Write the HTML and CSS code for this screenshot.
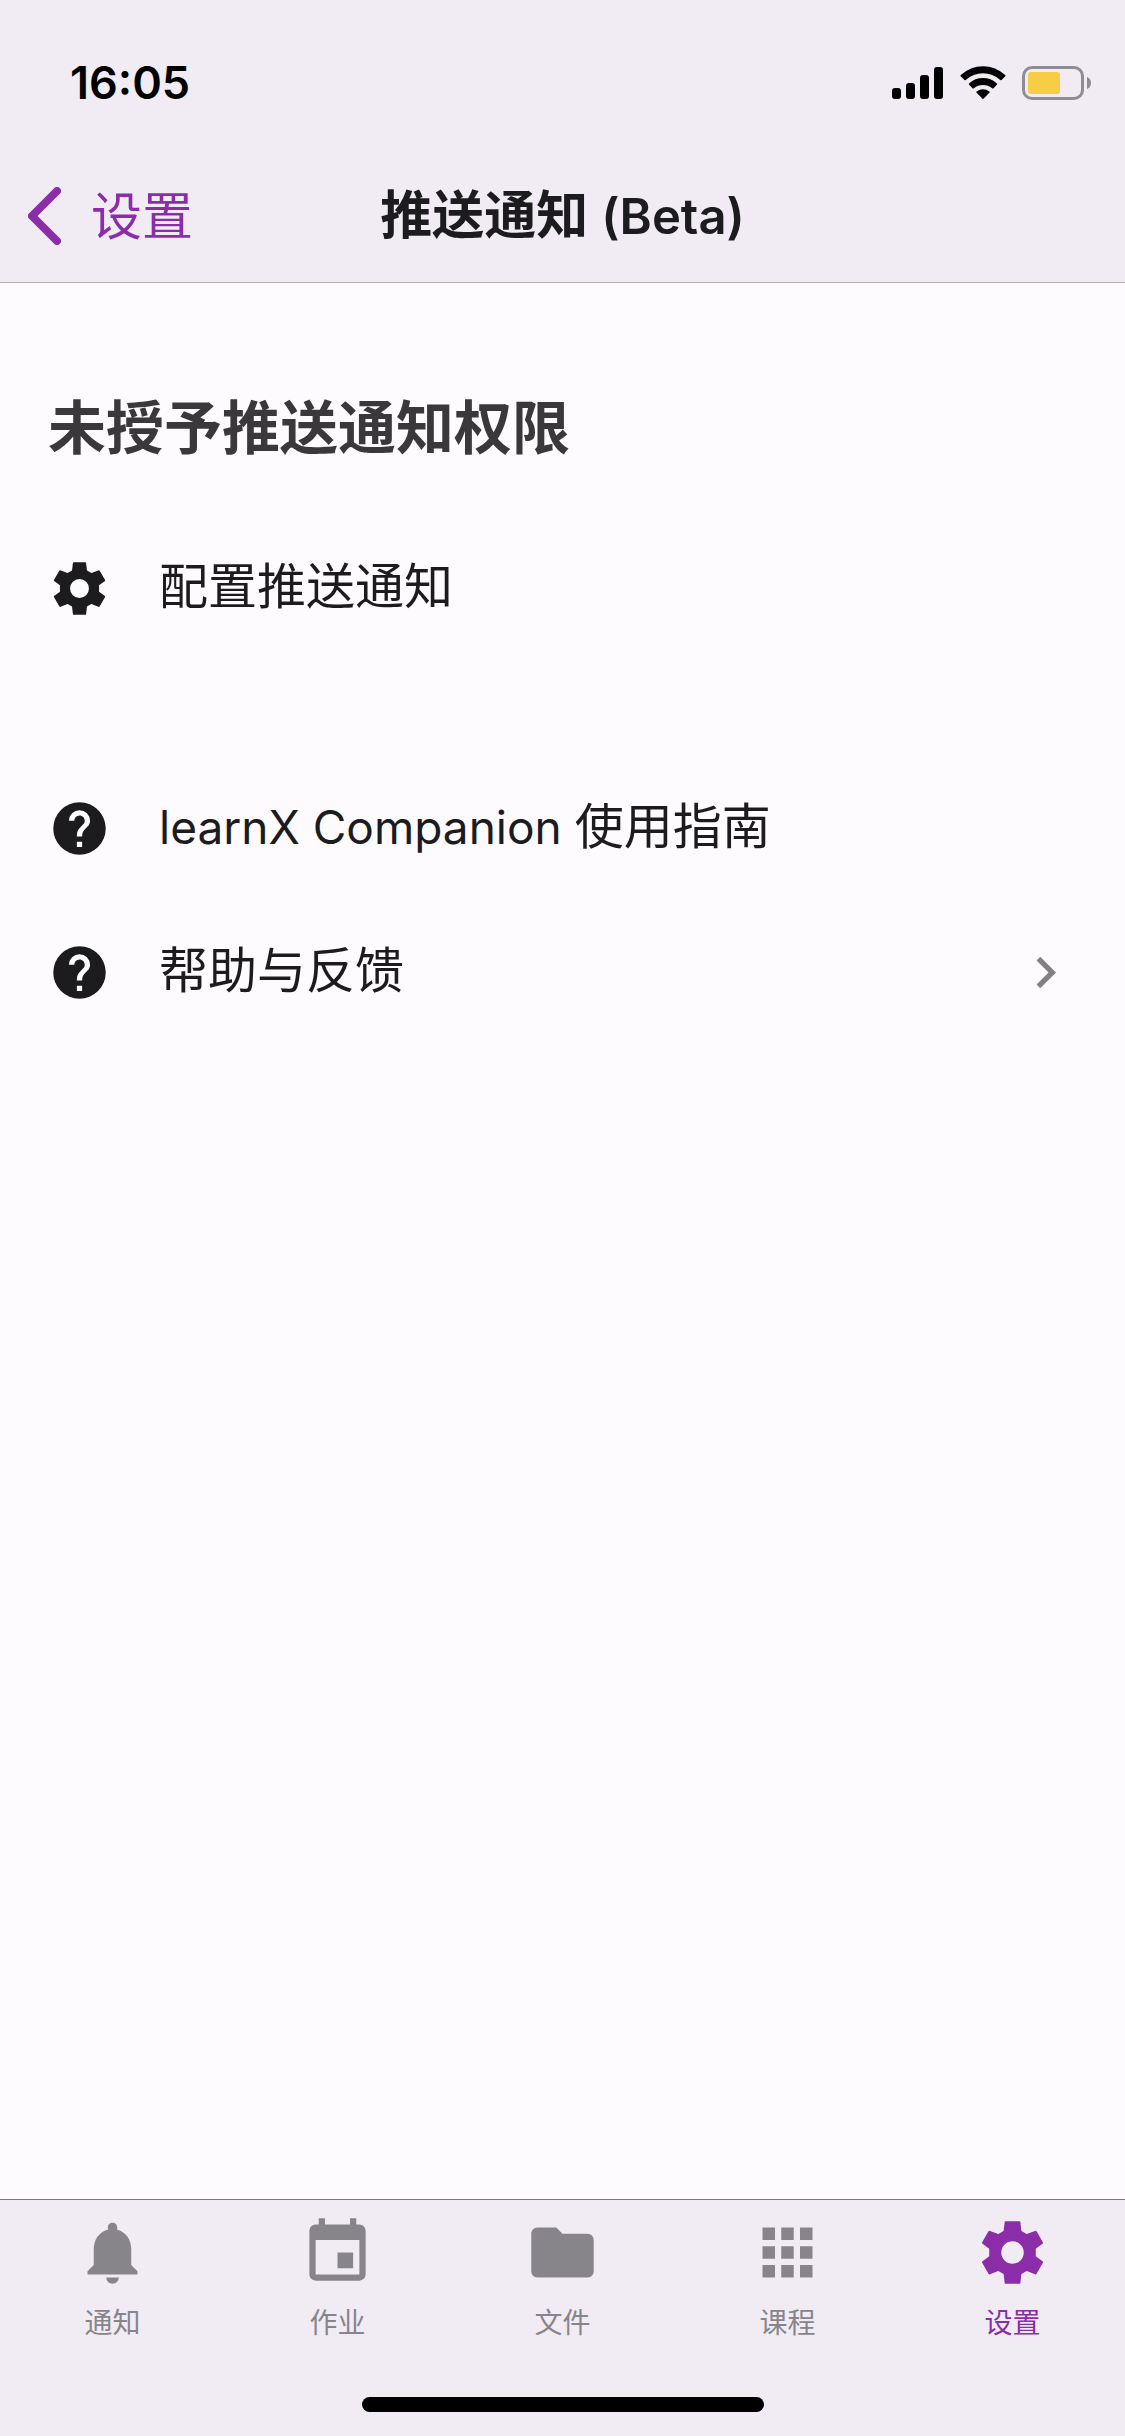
FILE: index.html
```html
<!DOCTYPE html>
<html lang="zh-CN">
<head>
<meta charset="utf-8">
<meta name="viewport" content="width=device-width, initial-scale=1">
<title>推送通知 (Beta)</title>
<link rel="stylesheet" href="styles.css">
</head>
<body>
<svg class="symbols" aria-hidden="true">
  <symbol id="cog" viewBox="0 0 24 24">
    <path fill-rule="evenodd" d="M9.7 2H14.3Q14.5 2 14.5 2.2L14.85 5.1L16.55 6.1L19.4 5Q19.6 5 19.7 5.2L21.75 8.8Q21.8 9 21.7 9.1L19.45 10.8V13.2L21.7 14.9Q21.8 15 21.75 15.2L19.7 18.8Q19.6 19 19.4 19L16.55 17.9L14.85 18.9L14.5 21.8Q14.5 22 14.3 22H9.7Q9.5 22 9.5 21.8L9.15 18.9L7.45 17.9L4.6 19Q4.4 19 4.3 18.8L2.25 15.2Q2.2 15 2.3 14.9L4.55 13.2V10.8L2.3 9.1Q2.2 9 2.25 8.8L4.3 5.2Q4.4 5 4.6 5L7.45 6.1L9.15 5.1L9.5 2.2Q9.5 2 9.7 2ZM12 8.4A3.6 3.6 0 1 0 12 15.6A3.6 3.6 0 1 0 12 8.4Z"/>
  </symbol>
  <symbol id="help" viewBox="0 0 24 24">
    <path d="M15.07 11.25L14.17 12.17C13.45 12.89 13 13.5 13 15H11V14.5C11 13.39 11.45 12.39 12.17 11.67L13.41 10.41C13.78 10.05 14 9.55 14 9C14 7.89 13.1 7 12 7A2 2 0 0 0 10 9H8A4 4 0 0 1 12 5A4 4 0 0 1 16 9C16 9.88 15.64 10.67 15.07 11.25M13 19H11V17H13M12 2A10 10 0 0 0 2 12A10 10 0 0 0 12 22A10 10 0 0 0 22 12C22 6.47 17.5 2 12 2Z"/>
  </symbol>
</svg>

<header class="header">
  <div class="status">
    <time class="clock">16:05</time>
    <div class="indicators">
      <svg width="52" height="34" viewBox="0 0 52 34" aria-label="信号">
        <rect x="0" y="22" width="9" height="11" rx="3"/>
        <rect x="14" y="17" width="9" height="16" rx="3"/>
        <rect x="28" y="9" width="9" height="24" rx="3"/>
        <rect x="42" y="1" width="9" height="32" rx="3"/>
      </svg>
      <svg width="46" height="34" viewBox="0 0 46 34" aria-label="无线网络">
        <path d="M23 33.3L29.6 26.6Q29.9 26 29.4 25.6A11 11 0 0 0 16.6 25.6Q16.1 26 16.4 26.6ZM9 18.6L12.7 22.4Q13.3 22.8 13.9 22.3A14.5 14.5 0 0 1 32.1 22.3Q32.7 22.8 33.3 22.4L37 18.6Q37.5 18 36.9 17.4A20.5 20.5 0 0 0 9.1 17.4Q8.5 18 9 18.6ZM.7 10.3L4.5 14.1Q5.1 14.5 5.7 14A25.5 25.5 0 0 1 40.3 14Q40.9 14.5 41.5 14.1L45.3 10.3Q45.8 9.7 45.2 9.1A32 32 0 0 0 .8 9.1Q.2 9.7 .7 10.3Z"/>
      </svg>
      <svg width="70" height="34" viewBox="0 0 70 34" aria-label="电池">
        <rect x="1.5" y="1.5" width="59" height="31" rx="8.5" fill="none" stroke="#8f8d92" stroke-width="3"/>
        <rect x="6" y="6" width="32" height="22" rx="3" fill="#f7cd46"/>
        <path d="M65 11A6.5 6.5 0 0 1 65 23Z" fill="#8f8d92"/>
      </svg>
    </div>
  </div>
  <nav class="navbar" aria-label="返回">
    <a class="back" href="#settings">
      <svg width="33" height="58" viewBox="0 0 33 58" aria-hidden="true"><path d="M29 4L4 29L29 54" fill="none" stroke="currentColor" stroke-width="8" stroke-linecap="round" stroke-linejoin="round"/></svg>
      <span class="back-label">设置</span>
    </a>
    <h1 class="title">推送通知 <span class="title-latin">(Beta)</span></h1>
  </nav>
</header>

<main class="content">
  <h2 class="heading">未授予推送通知权限</h2>
  <section class="group">
    <button class="row" type="button">
      <svg class="row-icon" aria-hidden="true"><use href="#cog"/></svg>
      <span class="row-label">配置推送通知</span>
    </button>
  </section>
  <section class="group">
    <button class="row" type="button">
      <svg class="row-icon" aria-hidden="true"><use href="#help"/></svg>
      <span class="row-label"><span class="row-latin">learnX Companion </span>使用指南</span>
    </button>
    <button class="row" type="button">
      <svg class="row-icon" aria-hidden="true"><use href="#help"/></svg>
      <span class="row-label">帮助与反馈</span>
      <svg class="row-icon row-chevron" viewBox="0 0 24 24" aria-hidden="true"><path d="M8.59 16.58L13.17 12L8.59 7.41L10 6L16 12L10 18Z"/></svg>
    </button>
  </section>
</main>

<footer class="footer">
  <nav class="tabs" aria-label="主导航">
    <a class="tab" href="#notices">
      <svg class="tab-icon" viewBox="0 0 24 24" aria-hidden="true"><path d="M12 22c1.1 0 2-.9 2-2h-4c0 1.1.89 2 2 2zm6-6v-5c0-3.07-1.64-5.64-4.5-6.32V4c0-.83-.67-1.5-1.5-1.5s-1.5.67-1.5 1.5v.68C7.63 5.36 6 7.92 6 11v5l-2 2v1h16v-1l-2-2z"/></svg>
      <span>通知</span>
    </a>
    <a class="tab" href="#assignments">
      <svg class="tab-icon" viewBox="0 0 24 24" aria-hidden="true"><path d="M19 3h-1V1h-2v2H8V1H6v2H5a2 2 0 0 0-2 2v14a2 2 0 0 0 2 2h14a2 2 0 0 0 2-2V5a2 2 0 0 0-2-2zm0 16H5V8h14v11zM12 12h5v5h-5z"/></svg>
      <span>作业</span>
    </a>
    <a class="tab" href="#files">
      <svg class="tab-icon" viewBox="0 0 24 24" aria-hidden="true"><path d="M10 4H4c-1.1 0-2 .9-2 2v12c0 1.1.9 2 2 2h16c1.1 0 2-.9 2-2V8c0-1.1-.9-2-2-2h-8l-2-2z"/></svg>
      <span>文件</span>
    </a>
    <a class="tab" href="#courses">
      <svg class="tab-icon" viewBox="0 0 24 24" aria-hidden="true"><path d="M4 4h4v4H4zM10 4h4v4h-4zM16 4h4v4h-4zM4 10h4v4H4zM10 10h4v4h-4zM16 10h4v4h-4zM4 16h4v4H4zM10 16h4v4h-4zM16 16h4v4h-4z"/></svg>
      <span>课程</span>
    </a>
    <a class="tab tab-active" href="#settings" aria-current="page">
      <svg class="tab-icon" aria-hidden="true"><use href="#cog"/></svg>
      <span>设置</span>
    </a>
  </nav>
  <div class="home-indicator"></div>
</footer>
</body>
</html>
```
FILE: styles.css
```css
:root {
  --bar: #f1ecf4;
  --surface: #fefbff;
  --ink: #1c1b1e;
  --accent: #8b2da8;
  --muted: #88858a;
}

* {
  box-sizing: border-box;
}

body {
  margin: 0;
  min-height: 100vh;
  display: flex;
  flex-direction: column;
  background: var(--surface);
  color: var(--ink);
  font-family: Inter, "Noto Sans CJK SC", sans-serif;
}

svg {
  display: block;
  flex: none;
  fill: currentColor;
}

.symbols {
  position: absolute;
  width: 0;
  height: 0;
}

.header {
  background: var(--bar);
  border-bottom: 1px solid #b3afb6;
}

.status {
  display: flex;
  justify-content: space-between;
  align-items: center;
  padding: 56px 33px 40px 70px;
  color: #000;
}

.clock {
  font-size: 45px;
  font-weight: 600;
  line-height: 54px;
}

.indicators {
  display: flex;
  gap: 16px;
}

.navbar {
  display: grid;
  grid-template-columns: 1fr auto 1fr;
  align-items: center;
  height: 132px;
  padding: 0 28px;
}

.back {
  display: flex;
  align-items: center;
  gap: 30px;
  color: var(--accent);
  font-size: 51px;
  line-height: 72px;
  text-decoration: none;
}

.back-label {
  padding-top: 2px;
}

.title {
  margin: 0;
  font-size: 52px;
  font-weight: 600;
  line-height: 72px;
}

.title-latin {
  font-size: 49px;
}

.content {
  flex: 1;
}

.heading {
  margin: 0;
  padding: 109px 48px 52px;
  color: #3a383b;
  font-size: 58px;
  font-weight: 600;
  line-height: 72px;
}

.group {
  margin-bottom: 96px;
}

.row {
  display: flex;
  align-items: center;
  gap: 48px;
  width: 100%;
  height: 144px;
  padding: 0 48px;
  border: 0;
  background: none;
  color: inherit;
  font: inherit;
  font-size: 49px;
  line-height: 72px;
  text-align: left;
}

.row-icon {
  width: 63px;
  height: 63px;
}

.row-label {
  flex: 1;
  padding-bottom: 3px;
}

.row-latin {
  font-size: 46px;
}

.row-chevron {
  color: #828083;
}

.footer {
  background: var(--bar);
  border-top: 1px solid #7b7680;
  padding: 15px 0 24px;
}

.tabs {
  display: grid;
  grid-template-columns: repeat(5, 1fr);
  margin-bottom: 54px;
}

.tab {
  display: flex;
  flex-direction: column;
  align-items: center;
  gap: 13px;
  color: var(--muted);
  font-size: 28px;
  line-height: 40px;
  text-decoration: none;
}

.tab-active {
  color: var(--accent);
}

.tab-icon {
  width: 75px;
  height: 75px;
}

.home-indicator {
  width: 402px;
  height: 15px;
  margin: 0 auto;
  border-radius: 8px;
  background: #000;
}
```
